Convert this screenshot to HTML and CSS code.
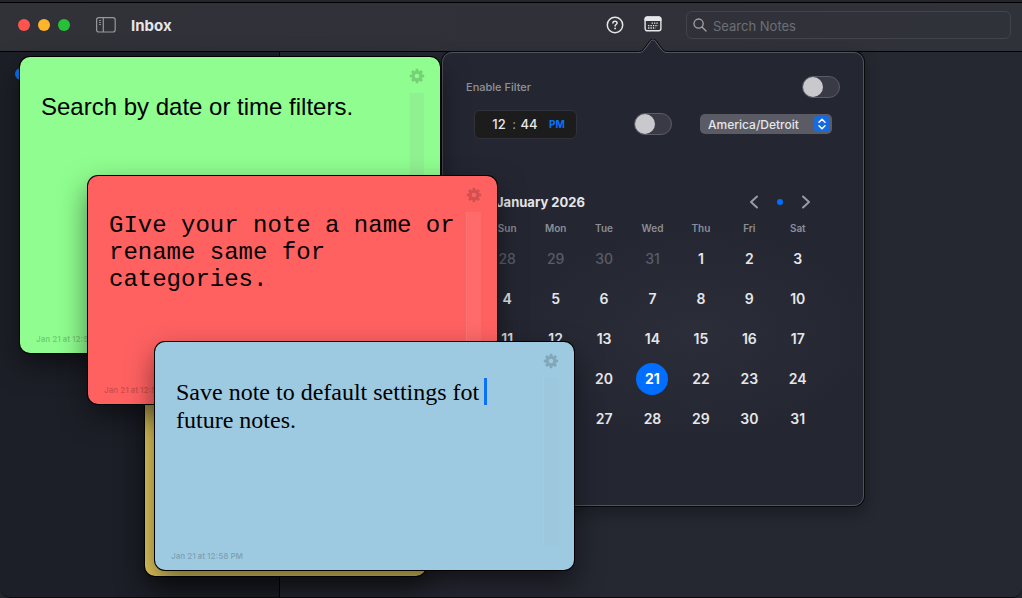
FILE: index.html
```html
<!DOCTYPE html>
<html lang="en">
<head>
    <meta charset="UTF-8">
    <meta name="viewport" content="width=device-width, initial-scale=1.0">
    <title>Inbox</title>
    <link rel="stylesheet" href="styles.css">
</head>
<body>
    <svg class="symbols" width="0" height="0" aria-hidden="true">
        <mask id="gear-mask">
            <rect width="16" height="16" fill="#fff"/>
            <circle cx="8" cy="8" r="2.3" fill="#000"/>
        </mask>
        <symbol id="gear" viewBox="0 0 16 16">
            <g fill="currentColor" mask="url(#gear-mask)">
                <rect x="6.5" y="0.8" width="3" height="14.4" rx="1"/>
                <rect x="6.5" y="0.8" width="3" height="14.4" rx="1" transform="rotate(45 8 8)"/>
                <rect x="6.5" y="0.8" width="3" height="14.4" rx="1" transform="rotate(90 8 8)"/>
                <rect x="6.5" y="0.8" width="3" height="14.4" rx="1" transform="rotate(135 8 8)"/>
                <circle cx="8" cy="8" r="5.3"/>
            </g>
        </symbol>
    </svg>

    <div class="window">
        <header class="titlebar">
            <div class="lights">
                <button class="light light-close" aria-label="Close"></button>
                <button class="light light-min" aria-label="Minimize"></button>
                <button class="light light-zoom" aria-label="Zoom"></button>
            </div>
            <button class="icon-btn sidebar-btn" aria-label="Toggle sidebar">
                <svg width="20" height="16" viewBox="0 0 20 16" fill="none" stroke="currentColor">
                    <rect x="0.6" y="0.6" width="18.6" height="14.4" rx="2.2" stroke-width="1.2"/>
                    <path d="M7.3 1v14" stroke-width="1.2"/>
                    <path d="M3 3.5h2M3 5.5h2M3 7.500h2" stroke-width="0.9"/>
                </svg>
            </button>
            <h1 class="title">Inbox</h1>
            <div class="tools">
                <button class="icon-btn" aria-label="Help">
                    <svg width="18" height="18" viewBox="0 0 18 18" fill="none" stroke="currentColor" stroke-width="1.5" stroke-linecap="round">
                        <circle cx="9" cy="9" r="7.7"/>
                        <path d="M6.9 7.1c0-1.2.9-1.9 2.1-1.9s2.1.8 2.1 1.8c0 1.5-2 1.5-2 2.9"/>
                        <circle cx="9.1" cy="12.4" r="0.9" fill="currentColor" stroke="none"/>
                    </svg>
                </button>
                <div class="filter">
                    <button class="icon-btn" aria-label="Date filter">
                        <svg width="18" height="18" viewBox="0 0 18 18" fill="none">
                            <rect x="1.1" y="2" width="15.8" height="13.8" rx="2.2" stroke="currentColor" stroke-width="1.4"/>
                            <path d="M0.6 6V4a2.6 2.6 0 0 1 2.6-2.6h11.6A2.6 2.6 0 0 1 17.4 4v2z" fill="currentColor"/>
                            <path d="M7.6 8.2h7M4.1 10.6h10M4.1 13h7.500" stroke="currentColor" stroke-width="1.3" stroke-dasharray="1.3 1.1"/>
                        </svg>
                    </button>
                    <div class="popover">
                        <svg class="popover-arrow" width="30" height="15" viewBox="0 0 30 15">
                            <path d="M0 13.5c4 0 5-1 7-3.5l5.5-7.5c1.5-2 3.5-2 5 0L23 10c2 2.5 3 3.5 7 3.5V15H0z" fill="#242732"/>
                            <path d="M0 12.5c3.5 0 4.5-1 6.300-3.300l5.500-7.500c1.700-2 4.700-2 6.400 0l5.500 7.500c1.800 2.300 2.800 3.300 6.300 3.300" fill="none" stroke="#08090c"/>
                            <path d="M0 13.5c4 0 5-1 7-3.5l5.5-7.5c1.5-2 3.5-2 5 0L23 10c2 2.5 3 3.5 7 3.5" fill="none" stroke="#5c5e68"/>
                        </svg>
                        <div class="row">
                            <label class="filter-label" for="enable">Enable Filter</label>
                            <input class="switch" type="checkbox" id="enable">
                        </div>
                        <div class="row row-time">
                            <div class="time">
                                <input class="time-field" value="12" aria-label="Hour">
                                <span class="colon">:</span>
                                <input class="time-field" value="44" aria-label="Minute">
                                <button class="period">PM</button>
                            </div>
                            <div class="zone">
                                <input class="switch" type="checkbox" aria-label="Use time">
                                <div class="select-wrap">
                                    <select class="select" aria-label="Time zone">
                                        <option>America/Detroit</option>
                                    </select>
                                    <svg class="select-icon" width="16" height="16" viewBox="0 0 16 16">
                                        <rect width="16" height="16" rx="4" fill="#176be0"/>
                                        <path d="M5 6.3l3-3 3 3M5 9.7l3 3 3-3" fill="none" stroke="#fff" stroke-width="1.5" stroke-linecap="round" stroke-linejoin="round"/>
                                    </svg>
                                </div>
                            </div>
                        </div>
                        <div class="calendar">
                            <div class="calendar-head">
                                <h2 class="month">January 2026</h2>
                                <div class="month-nav">
                                    <button class="nav-btn" aria-label="Previous month">
                                        <svg width="10" height="14" viewBox="0 0 10 14"><path d="M8 1.5L2 7l6 5.5"/></svg>
                                    </button>
                                    <button class="nav-btn" aria-label="Today"><span class="dot"></span></button>
                                    <button class="nav-btn" aria-label="Next month">
                                        <svg width="10" height="14" viewBox="0 0 10 14"><path d="M2 1.5L8 7l-6 5.5"/></svg>
                                    </button>
                                </div>
                            </div>
                            <table class="days">
                                <thead>
                                    <tr><th>Sun</th><th>Mon</th><th>Tue</th><th>Wed</th><th>Thu</th><th>Fri</th><th>Sat</th></tr>
                                </thead>
                                <tbody>
                                    <tr><td class="out">28</td><td class="out">29</td><td class="out">30</td><td class="out">31</td><td>1</td><td>2</td><td>3</td></tr>
                                    <tr><td>4</td><td>5</td><td>6</td><td>7</td><td>8</td><td>9</td><td>10</td></tr>
                                    <tr><td>11</td><td>12</td><td>13</td><td>14</td><td>15</td><td>16</td><td>17</td></tr>
                                    <tr><td>18</td><td>19</td><td>20</td><td><span class="today">21</span></td><td>22</td><td>23</td><td>24</td></tr>
                                    <tr><td>25</td><td>26</td><td>27</td><td>28</td><td>29</td><td>30</td><td>31</td></tr>
                                </tbody>
                            </table>
                        </div>
                    </div>
                </div>
            </div>
            <div class="search">
                <svg width="14" height="14" viewBox="0 0 14 14" fill="none" stroke="#a2a3a8" stroke-width="1.3" stroke-linecap="round">
                    <circle cx="5.6" cy="5.6" r="4.6"/>
                    <path d="M9 9l4 4"/>
                </svg>
                <input class="search-input" type="search" placeholder="Search Notes" aria-label="Search Notes">
            </div>
        </header>
        <main class="content">
            <aside class="sidebar"><span class="badge"></span></aside>
            <section class="list"></section>
        </main>
    </div>

    <!-- Floating notes -->
    <article class="note note-yellow"></article>
    <article class="note note-green">
        <div class="note-top"><button class="gear" aria-label="Note settings"><svg width="16" height="16"><use href="#gear"/></svg></button></div>
        <div class="note-body">
            <textarea class="note-text" aria-label="Note" spellcheck="false">Search by date or time filters.</textarea>
            <div class="track"></div>
        </div>
        <footer class="note-date">Jan 21 at 12:58 PM</footer>
    </article>
    <article class="note note-red">
        <div class="note-top"><button class="gear" aria-label="Note settings"><svg width="16" height="16"><use href="#gear"/></svg></button></div>
        <div class="note-body">
            <textarea class="note-text" aria-label="Note" spellcheck="false">GIve your note a name or rename same for categories.</textarea>
            <div class="track"></div>
        </div>
        <footer class="note-date">Jan 21 at 12:58 PM</footer>
    </article>
    <article class="note note-blue">
        <div class="note-top"><button class="gear" aria-label="Note settings"><svg width="16" height="16"><use href="#gear"/></svg></button></div>
        <div class="note-body">
            <textarea class="note-text" aria-label="Note" spellcheck="false">Save note to default settings fot future notes.</textarea>
            <span class="caret"></span>
            <div class="track"></div>
        </div>
        <footer class="note-date">Jan 21 at 12:58 PM</footer>
    </article>
</body>
</html>
```
FILE: styles.css
```css
* {
    box-sizing: border-box;
}
body {
    margin: 0;
    height: 100vh;
    padding: 2px 0 0;
    overflow: hidden;
    background: #24252f;
    color: #e6e6e9;
    font-family: Inter, "Liberation Sans", sans-serif;
    font-size: 13px;
}
button,
input,
select,
textarea {
    margin: 0;
    padding: 0;
    border: none;
    outline: none;
    background: none;
    color: inherit;
    font: inherit;
}
h1,
h2 {
    margin: 0;
}
svg {
    display: block;
}
.symbols {
    position: absolute;
}

/* Window */
.window {
    display: flex;
    flex-direction: column;
    height: 100%;
    border-top: 1px solid #000;
    border-bottom: 1px solid #0b0b0e;
    border-radius: 0 0 10px 10px;
    overflow: hidden;
}
.titlebar {
    display: flex;
    align-items: center;
    height: 49px;
    flex: none;
    padding: 0 11px 4px 18px;
    border-bottom: 1px solid #000;
    background: linear-gradient(90deg, #313138, #303239);
}
.lights {
    display: flex;
    gap: 8px;
}
.light {
    width: 12px;
    height: 12px;
    border-radius: 50%;
}
.light-close {
    background: #ff544d;
}
.light-min {
    background: #ffb429;
}
.light-zoom {
    background: #27c138;
}
.sidebar-btn {
    margin-left: 26px;
    color: #97979c;
}
.title {
    margin-left: 15px;
    font-size: 15px;
    font-weight: 700;
}
.tools {
    display: flex;
    align-items: center;
    gap: 20px;
    margin-left: auto;
    margin-right: 24px;
}
.search {
    display: flex;
    align-items: center;
    gap: 6px;
    width: 325px;
    height: 28px;
    padding: 0 7px 0 6px;
    border: 1px solid #42444b;
    border-radius: 6px;
}
.search-input {
    flex: 1;
    min-width: 0;
    padding-top: 2px;
}
.search-input::placeholder {
    color: #6d6f76;
    opacity: 1;
}
.content {
    display: flex;
    flex: 1;
}
.sidebar {
    width: 280px;
    padding: 16px 15px;
    border-right: 1px solid #000;
    background: #1d1f28;
}
.badge {
    display: block;
    width: 12px;
    height: 12px;
    border-radius: 50%;
    background: #0a72f5;
}
.list {
    flex: 1;
    background: #252731;
}

/* Date filter popover */
.filter {
    position: relative;
}
.popover {
    position: absolute;
    z-index: 1;
    top: 37px;
    left: 50%;
    width: 422px;
    height: 454px;
    margin-left: -211px;
    padding: 23px 23px 0;
    border: 1px solid #50525c;
    border-radius: 10px;
    background: radial-gradient(ellipse 180px 110px at 60% 62%, #2b2e38, #242732);
    box-shadow: 0 0 0 1px #08090c, 0 6px 16px rgba(0, 0, 0, 0.3);
}
.popover-arrow {
    position: absolute;
    top: -14px;
    left: 50%;
    margin-left: -15px;
}
.row {
    display: flex;
    align-items: center;
    justify-content: space-between;
}
.row-time {
    margin-top: 12px;
    padding: 0 8px;
}
.filter-label {
    color: #90929b;
    font-size: 11px;
    font-weight: 500;
}
.switch {
    appearance: none;
    width: 38px;
    height: 22px;
    border: 1px solid #5a5b65;
    border-radius: 11px;
    background: #393a46;
}
.switch::before {
    content: "";
    display: block;
    width: 20px;
    height: 20px;
    border-radius: 50%;
    background: #c9c9cd;
}
.switch:checked {
    background: #006eff;
}
.switch:checked::before {
    margin-left: 16px;
}
.time {
    display: flex;
    align-items: center;
    width: 103px;
    height: 29px;
    padding-left: 15px;
    border: 1px solid #30313a;
    border-radius: 6px;
    background: #1c1c1c;
}
.time-field {
    width: 18px;
    text-align: center;
    font-weight: 500;
}
.colon {
    width: 12px;
    text-align: center;
    color: #a0a0a4;
}
.period {
    margin-left: 11px;
    color: #0a72f5;
    font-size: 10px;
    font-weight: 700;
}
.zone {
    display: flex;
    align-items: center;
    gap: 28px;
}
.select-wrap {
    position: relative;
}
.select {
    display: block;
    appearance: none;
    width: 132px;
    height: 20px;
    padding: 0 24px 0 8px;
    border-radius: 5px;
    background: #5a5b65;
    font-size: 12px;
    font-weight: 500;
}
.select option {
    color: #000;
}
.select-icon {
    position: absolute;
    top: 2px;
    right: 2px;
    pointer-events: none;
}
.calendar {
    margin: 53px 18px 0 17px;
}
.calendar-head {
    display: flex;
    align-items: center;
    justify-content: space-between;
    height: 20px;
    padding: 0 11px 0 13px;
}
.month {
    font-size: 13px;
    font-weight: 700;
}
.month-nav {
    display: flex;
    gap: 16px;
}
.nav-btn {
    display: flex;
    align-items: center;
    height: 14px;
}
.nav-btn path {
    fill: none;
    stroke: #9a9ba2;
    stroke-width: 2;
    stroke-linecap: round;
    stroke-linejoin: round;
}
.dot {
    width: 6px;
    height: 6px;
    margin: 0 2px;
    border-radius: 50%;
    background: #006eff;
}
.days {
    width: 100%;
    margin-top: 6px;
    border-collapse: collapse;
    table-layout: fixed;
    text-align: center;
}
.days th {
    height: 21px;
    padding: 0;
    color: #8c8e98;
    font-size: 10px;
    font-weight: 600;
}
.days td {
    height: 40px;
    padding: 0;
    font-size: 14px;
    font-weight: 600;
}
.days .out {
    color: #5a5c66;
    font-weight: 500;
}
.today {
    display: block;
    width: 32px;
    margin: 0 auto;
    border-radius: 50%;
    background: #006eff;
    color: #fff;
    font-weight: 700;
    line-height: 32px;
}

/* Notes */
.note {
    position: absolute;
    z-index: 2;
    display: flex;
    flex-direction: column;
    border-radius: 10px;
    box-shadow: 0 0 0 1px #000, 0 12px 28px rgba(0, 0, 0, 0.5);
    color: #000;
}
.note-green {
    top: 57px;
    left: 20px;
    width: 420px;
    height: 296px;
    background: #8ffd8f;
    font-family: "Liberation Sans", Arial, sans-serif;
}
.note-red {
    top: 176px;
    left: 88px;
    width: 409px;
    height: 228px;
    background: #ff6161;
    font-family: "Liberation Mono", "Courier New", monospace;
}
.note-blue {
    top: 342px;
    left: 155px;
    width: 419px;
    height: 228px;
    background: #9ecae1;
    font-family: "Liberation Serif", "Times New Roman", serif;
}
.note-yellow {
    top: 347px;
    left: 145px;
    width: 281px;
    height: 229px;
    background: #e0c75c;
}
.note-top {
    display: flex;
    justify-content: flex-end;
    height: 36px;
    padding: 11px 15px 0 0;
}
.gear {
    height: 16px;
    color: #000;
    opacity: 0.17;
}
.note-body {
    position: relative;
    display: flex;
    flex: 1;
    padding: 0 16px 0 21px;
}
.note-text {
    flex: 1;
    min-width: 0;
    padding-right: 6px;
    resize: none;
    overflow: hidden;
    font-size: 24px;
    line-height: 27px;
}
.note-blue .note-text {
    line-height: 28px;
}
.track {
    width: 15px;
    border-left: 1px solid rgba(255, 255, 255, 0.08);
    background: rgba(160, 180, 180, 0.1);
}
.note-green .track {
    background: rgba(160, 160, 160, 0.12);
}
.note-red .track {
    background: rgba(255, 255, 255, 0.06);
}
.caret {
    position: absolute;
    top: 0;
    left: 329px;
    width: 3px;
    height: 27px;
    background: #0a72f5;
}
.note-date {
    height: 24px;
    padding-left: 16px;
    color: rgba(0, 0, 0, 0.2);
    font-family: Inter, "Liberation Sans", sans-serif;
    font-size: 8px;
    font-weight: 700;
    line-height: 20px;
}
```
